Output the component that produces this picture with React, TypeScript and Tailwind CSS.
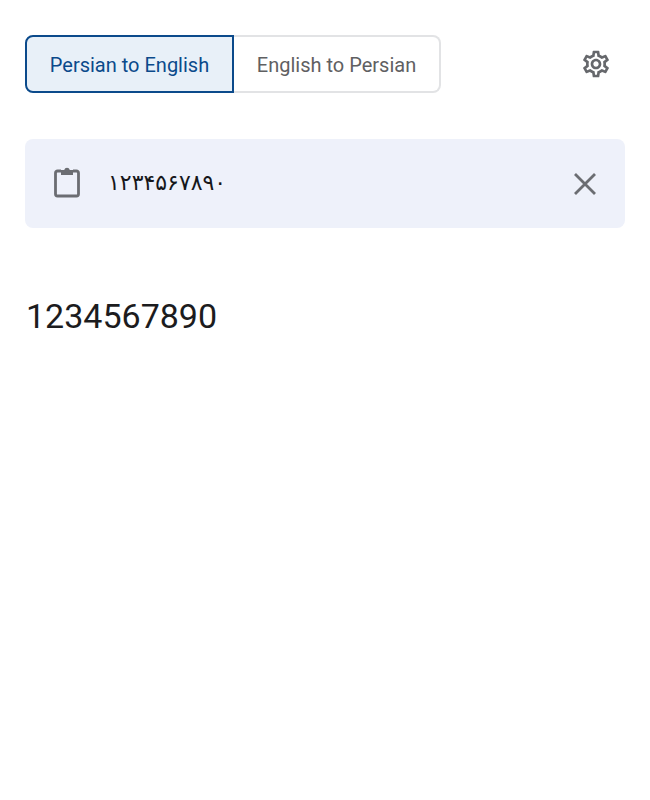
import { MdOutlineSettings } from "react-icons/md";

function ClipboardIcon() {
  return (
    <svg width="26" height="32" viewBox="0 0 26 32" fill="none" className="mb-[3px] ml-[1px] text-[#6b6d72]">
      <path d="M7 5H3.5a2 2 0 0 0-2 2v21a2 2 0 0 0 2 2h19a2 2 0 0 0 2-2V7a2 2 0 0 0-2-2H19" stroke="currentColor" strokeWidth="2.8" />
      <path d="M7 9V4h3.2a2.9 2.9 0 0 1 5.6 0H19v5z" fill="currentColor" />
    </svg>
  );
}

function CloseIcon() {
  return (
    <svg width="24" height="24" viewBox="0 0 24 24" fill="none" className="text-[#6b6d72]">
      <path d="M2 2l20 20M22 2L2 22" stroke="currentColor" strokeWidth="2.8" />
    </svg>
  );
}

export default function App() {
  return (
    <div className="h-[800px] w-[650px] bg-white px-[25px] pt-[35px] font-['Roboto',sans-serif]">
      <div className="flex items-center">
        <div className="flex h-[58px]">
          <button className="w-[209px] rounded-l-[8px] border-2 border-[#0b4a8b] bg-[#e8f0f8] pt-[1px] text-[20px] text-[#0b4a8b]">
            Persian to English
          </button>
          <button className="w-[207px] rounded-r-[8px] border-2 border-l-0 border-[#e2e3e5] bg-white pt-[1px] text-[20px] text-[#5f6062]">
            English to Persian
          </button>
        </div>
        <MdOutlineSettings className="ml-[139px] text-[#66686c]" size={32} />
      </div>

      <div className="mt-[46px] flex h-[89px] items-center rounded-[8px] bg-[#eef1fa] px-[28px]">
        <ClipboardIcon />
        <span className="ml-[28px] pb-[3px] font-['DejaVu_Sans',sans-serif] text-[22px] text-[#16171a]">
          ۱۲۳۴۵۶۷۸۹۰
        </span>
        <div className="ml-auto">
          <CloseIcon />
        </div>
      </div>

      <p className="mt-[65px] pl-[1px] text-[34px] leading-[46px] text-[#1c1c1e]">1234567890</p>
    </div>
  );
}
